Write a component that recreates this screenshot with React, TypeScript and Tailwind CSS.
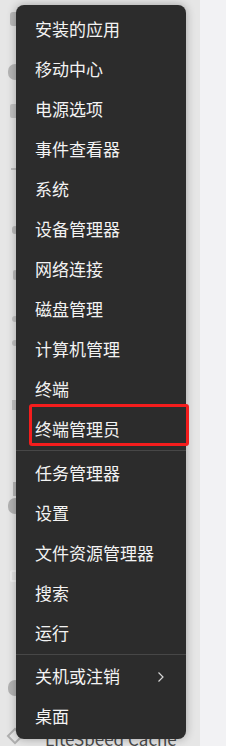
import React from "react";

const group1 = [
  "安装的应用",
  "移动中心",
  "电源选项",
  "事件查看器",
  "系统",
  "设备管理器",
  "网络连接",
  "磁盘管理",
  "计算机管理",
  "终端",
];
const group2 = ["任务管理器", "设置", "文件资源管理器", "搜索", "运行"];

function Item({ label, children }: { label: string; children?: React.ReactNode }) {
  return (
    <div className="relative h-[40px] flex items-center pl-[19px] pr-[20px] pb-[4px] text-[17px] leading-none text-[#f3f3f3]">
      <span>{label}</span>
      {children}
    </div>
  );
}

export default function App() {
  return (
    <div
      className="relative w-[226px] h-[746px] overflow-hidden flex"
      style={{ fontFamily: '"Segoe UI", "Noto Sans CJK SC", "Noto Sans", sans-serif' }}
    >
      {/* background page (mostly covered by the menu) */}
      <div className="w-[200px] h-full bg-[#e6e6e6] flex">
        <div className="w-[30px] flex flex-col items-center pt-[12px]">
          <div className="w-[10px] h-[14px] rounded-[3px] bg-[#b9b9b9]" />
          <div className="mt-[38px] w-[14px] h-[16px] rounded-full bg-[#b5b5b5]" />
          <div className="mt-[24px] w-[10px] h-[14px] rounded-[2px] bg-[#c2c2c2]" />
          <div className="mt-[50px] w-[8px] h-[2px] bg-[#bdbdbd]" />
          <div className="mt-[56px] w-[6px] h-[8px] rounded-full bg-[#bcbcbc]" />
          <div className="mt-[36px] w-[4px] h-[10px] rounded-full bg-[#bcbcbc]" />
          <div className="mt-[36px] w-[6px] h-[6px] rounded-full bg-[#c4c4c4]" />
          <div className="mt-[18px] w-[6px] h-[6px] rounded-full bg-[#c4c4c4]" />
          <div className="mt-[54px] w-[6px] h-[10px] bg-[#c4c4c4]" />
          <div className="mt-[72px] w-[4px] h-[14px] bg-[#b8b8b8]" />
          <div className="mt-[2px] w-[14px] h-[16px] rounded-full bg-[#b3b3b3]" />
          <div className="mt-[56px] w-[10px] h-[12px] rounded-[2px] border-2 border-[#f2f2f2]" />
          <div className="mt-[98px] w-[14px] h-[16px] rounded-full bg-[#b3b3b3]" />
          <div className="mt-[34px] w-[12px] h-[12px] rotate-45 border-2 border-[#b0b0b0]" />
        </div>
        <div className="flex-1 flex flex-col justify-end pl-[15px]">
          <div className="h-[16px] text-[17px] leading-none text-[#4a4a4a] whitespace-nowrap">
            LiteSpeed Cache
          </div>
        </div>
      </div>
      <div className="flex-1 h-full bg-[#f2f2f4]" />

      {/* context menu */}
      <div className="absolute left-[16px] top-[5px] w-[170px] rounded-[8px] bg-[#2c2c2c] pt-[5px] pb-[2px] shadow-[0_0_10px_rgba(0,0,0,0.3)]">
        {group1.map((l) => (
          <Item key={l} label={l} />
        ))}
        <Item label="终端管理员">
          <div className="absolute left-[13px] top-[-6px] w-[160px] h-[42px] rounded-[3px] border-[3px] border-[#f41d1d]" />
        </Item>
        <div className="h-[4px]">
          <div className="h-[1px] bg-[#474747]" />
        </div>
        {group2.map((l) => (
          <Item key={l} label={l} />
        ))}
        <div className="h-[3px]">
          <div className="h-[1px] bg-[#474747]" />
        </div>
        <Item label="关机或注销">
          <svg
            className="absolute left-[141px] top-[14px]"
            width="8"
            height="12"
            viewBox="0 0 8 12"
            fill="none"
          >
            <path d="M1.5 1.5 L6 6 L1.5 10.5" stroke="#d6d6d6" strokeWidth="1.2" />
          </svg>
        </Item>
        <Item label="桌面" />
      </div>
    </div>
  );
}
